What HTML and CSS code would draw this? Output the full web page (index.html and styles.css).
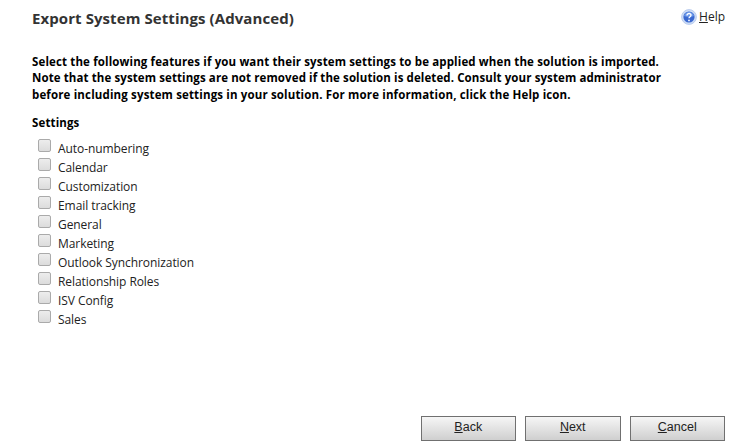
FILE: index.html
```html
<!DOCTYPE html>
<html lang="en">
<head>
<meta charset="utf-8">
<title>Export System Settings (Advanced)</title>
<link rel="stylesheet" href="styles.css">
</head>
<body>
<main class="dialog">
  <header class="header">
    <h1 class="title"><span>Export System Settings (Advanced)</span></h1>
    <a class="help">
      <svg class="help-icon" viewBox="0 0 16 16" aria-hidden="true">
        <circle cx="8" cy="8" r="7.4" fill="#cfdef6" stroke="#b4c8ec" stroke-width="0.9"/>
        <circle cx="8" cy="8" r="5.6" fill="#3a69d0"/>
        <path d="M3 7a5.1 5.1 0 0 1 10 0Q8 9 3 7z" fill="#6a97e8"/>
        <path d="M6 6.4C6 3.8 10.2 3.9 10 6.3C9.9 7.8 8 7.7 8 9.3" fill="none" stroke="#fff" stroke-width="1.4"/>
        <circle cx="8" cy="11.4" r="0.9" fill="#fff"/>
      </svg>
      <span class="help-label"><u>H</u>elp</span>
    </a>
  </header>
  <p class="intro">
    <span class="line line-a">Select the following features if you want their system settings to be applied when the solution is imported.</span>
    <span class="line line-b">Note that the system settings are not removed if the solution is deleted. Consult your system administrator</span>
    <span class="line line-c">before including system settings in your solution. For more information, click the Help icon.</span>
  </p>
  <h2 class="subtitle"><span>Settings</span></h2>
  <div class="options">
    <label class="option"><input class="check" type="checkbox"><span>Auto-numbering</span></label>
    <label class="option"><input class="check" type="checkbox"><span>Calendar</span></label>
    <label class="option"><input class="check" type="checkbox"><span>Customization</span></label>
    <label class="option"><input class="check" type="checkbox"><span>Email tracking</span></label>
    <label class="option"><input class="check" type="checkbox"><span>General</span></label>
    <label class="option"><input class="check" type="checkbox"><span>Marketing</span></label>
    <label class="option"><input class="check" type="checkbox"><span>Outlook Synchronization</span></label>
    <label class="option"><input class="check" type="checkbox"><span>Relationship Roles</span></label>
    <label class="option"><input class="check" type="checkbox"><span>ISV Config</span></label>
    <label class="option"><input class="check" type="checkbox"><span>Sales</span></label>
  </div>
  <footer class="actions">
    <button class="button"><u>B</u>ack</button>
    <button class="button"><u>N</u>ext</button>
    <button class="button"><u>C</u>ancel</button>
  </footer>
</main>
</body>
</html>
```

FILE: styles.css
```css
* { box-sizing: border-box; }
body {
  margin: 0;
  background: #fff;
  color: #000;
  font-family: "Open Sans", "Noto Sans", sans-serif;
}
.dialog {
  display: flex;
  flex-direction: column;
  width: 756px;
  height: 446px;
  padding: 8px 31px 5px 32px;
}
.header {
  display: flex;
  justify-content: space-between;
  height: 46px;
}
.title {
  margin: 0;
  color: #333;
  font-size: 15px;
  font-weight: 700;
  line-height: 21px;
  letter-spacing: 0.08px;
}
.help {
  display: flex;
  gap: 2px;
  height: 17px;
  align-items: center;
  font-size: 12px;
  color: #222;
}
.help-icon { width: 16px; height: 16px; }
.intro {
  margin: 0;
  font-size: 11.5px;
  font-weight: 700;
  line-height: 16.4px;
}
.line { display: block; width: max-content; }
.line-a { letter-spacing: 0.135px; }
.line-b { letter-spacing: 0.1px; }
.line-c { letter-spacing: 0.15px; }
.subtitle {
  margin: 12px 0 0;
  font-size: 11.5px;
  font-weight: 700;
  line-height: 16px;
  letter-spacing: 0.13px;
}
.options { margin: 7.6px 0 0 6px; }
.option {
  display: flex;
  gap: 7px;
  height: 19.05px;
  font-size: 12px;
  line-height: 19px;
  letter-spacing: -0.07px;
  color: #222;
}
.check {
  appearance: none;
  width: 13px;
  height: 13px;
  margin: 0;
  border: 1px solid #aaa;
  border-radius: 2px;
  background: linear-gradient(#ededed, #dcdcdc);
}
.actions {
  display: flex;
  justify-content: flex-end;
  gap: 9px;
  margin-top: auto;
}
.button {
  width: 95.5px;
  height: 25px;
  padding: 0 0 3px;
  border: 1px solid #707070;
  background: linear-gradient(#f6f6f6, #cfcfcf);
  font: 12.5px "Liberation Sans", sans-serif;
  color: #222;
}
```
